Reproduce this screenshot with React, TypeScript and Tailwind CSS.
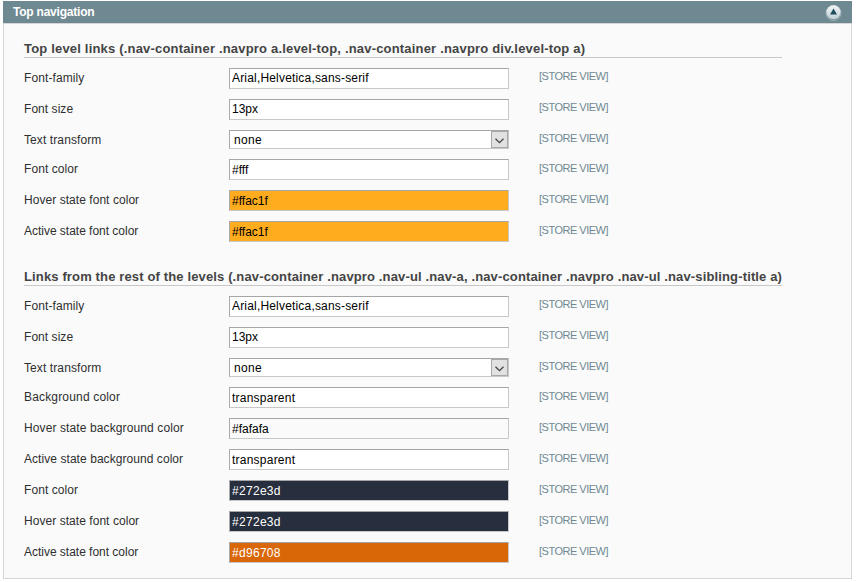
type Field = {
  label: string;
  value: string;
  look?: string;
  select?: boolean;
  labelTracking?: string;
  valueTracking?: string;
  color?: boolean;
};

const topLevel: Field[] = [
  { label: "Font-family", value: "Arial,Helvetica,sans-serif", labelTracking: "tracking-[0.1px]", valueTracking: "tracking-[0.18px]" },
  { label: "Font size", value: "13px", labelTracking: "tracking-[0.05px]" },
  { label: "Text transform", value: "none", select: true, labelTracking: "tracking-[0.1px]", valueTracking: "tracking-[0.3px]" },
  { label: "Font color", value: "#fff", color: true, labelTracking: "tracking-[0.08px]" },
  { label: "Hover state font color", value: "#ffac1f", look: "bg-[#ffac1f] text-black", color: true, labelTracking: "tracking-[0.05px]" },
  { label: "Active state font color", value: "#ffac1f", look: "bg-[#ffac1f] text-black", color: true, labelTracking: "tracking-[-0.02px]" },
];

const otherLevels: Field[] = [
  { label: "Font-family", value: "Arial,Helvetica,sans-serif", labelTracking: "tracking-[0.1px]", valueTracking: "tracking-[0.18px]" },
  { label: "Font size", value: "13px", labelTracking: "tracking-[0.05px]" },
  { label: "Text transform", value: "none", select: true, labelTracking: "tracking-[0.1px]", valueTracking: "tracking-[0.3px]" },
  { label: "Background color", value: "transparent", color: true, labelTracking: "tracking-[0.17px]", valueTracking: "tracking-[0.23px]" },
  { label: "Hover state background color", value: "#fafafa", look: "bg-[#fafafa] text-black", color: true, labelTracking: "tracking-[0.11px]" },
  { label: "Active state background color", value: "transparent", color: true, labelTracking: "tracking-[0.06px]", valueTracking: "tracking-[0.23px]" },
  { label: "Font color", value: "#272e3d", look: "bg-[#272e3d] text-white", color: true, labelTracking: "tracking-[0.08px]", valueTracking: "tracking-[0.3px]" },
  { label: "Hover state font color", value: "#272e3d", look: "bg-[#272e3d] text-white", color: true, labelTracking: "tracking-[0.05px]", valueTracking: "tracking-[0.3px]" },
  { label: "Active state font color", value: "#d96708", look: "bg-[#d96708] text-white", color: true, labelTracking: "tracking-[-0.02px]", valueTracking: "tracking-[0.3px]" },
];

function Row({ field }: { field: Field }) {
  const { label, value, look = "bg-white text-black", select, labelTracking = "", valueTracking = "", color } = field;
  const box = select ? "h-[19px] pl-[4px]" : color ? "h-[21px] pt-px pl-[2px]" : "h-[21px] pb-px pl-[2px]";
  return (
    <div className={`flex items-start ${select ? "h-[29px]" : "h-[31px]"}`}>
      <div className={`w-[205px] shrink-0 pt-[2px] leading-4 text-[#2f2f2f] ${labelTracking}`}>{label}</div>
      <div
        className={`flex w-[280px] shrink-0 items-center border border-t-[#a6a6a6] border-l-[#aaa] border-r-[#c8c8c8] border-b-[#c8c8c8] ${box} ${look} ${valueTracking}`}
      >
        <span className="grow leading-4">{value}</span>
        {select && (
          <span className="flex h-[17px] w-[17px] items-center justify-center border border-[#a8a8a8] bg-[#e1e1e1]">
            <svg className="mt-[2px]" width="9" height="6" viewBox="0 0 9 6" fill="none">
              <path d="M0.5 0.7 4.5 4.7 8.5 0.7" stroke="#444" strokeWidth="1.3" />
            </svg>
          </span>
        )}
      </div>
      <div className={`pl-[30px] text-[11px] leading-4 tracking-[-0.5px] text-[#6f8992] ${color ? "pt-px" : ""}`}>[STORE VIEW]</div>
    </div>
  );
}

function Group({ title, fields, tracking }: { title: string; fields: Field[]; tracking: string }) {
  return (
    <section>
      <h4 className={`mb-[10px] h-[18px] w-[758px] border-b border-[#c8c8c8] text-[13px] leading-[17px] font-bold whitespace-nowrap text-[#444] ${tracking}`}>
        {title}
      </h4>
      {fields.map((field, i) => (
        <Row key={i} field={field} />
      ))}
    </section>
  );
}

export default function App() {
  return (
    <div className="h-[582px] w-[856px] bg-white pt-px pl-[3px] font-['Liberation_Sans',Arial,sans-serif] text-[12px]">
      <header className="flex h-[22px] w-[849px] items-center justify-between bg-[#6f8992] pr-[9px] pl-[10px] font-bold text-white">
        <span className="leading-4 tracking-[-0.22px]">Top navigation</span>
        <svg width="18" height="18" viewBox="0 0 18 18">
          <defs>
            <linearGradient id="knob" x1="0" y1="0" x2="0" y2="1">
              <stop offset="0" stopColor="#f1f5f6" />
              <stop offset="1" stopColor="#c3d1d5" />
            </linearGradient>
          </defs>
          <circle cx="8.5" cy="10" r="7.5" fill="none" stroke="#a9bbc1" strokeWidth="0.8" />
          <circle cx="8.5" cy="9.2" r="7" fill="url(#knob)" />
          <path d="M8.5 5.6 12 11.5H5Z" fill="#1d4e5b" />
        </svg>
      </header>
      <main className="flex h-[556px] w-[849px] flex-col gap-[16px] border border-[#d6d6d6] bg-[#fafafa] pt-[16px] pl-[20px]">
        <Group title="Top level links (.nav-container .navpro a.level-top, .nav-container .navpro div.level-top a)" fields={topLevel} tracking="tracking-[0.185px]" />
        <Group title="Links from the rest of the levels (.nav-container .navpro .nav-ul .nav-a, .nav-container .navpro .nav-ul .nav-sibling-title a)" fields={otherLevels} tracking="tracking-[0.14px]" />
      </main>
    </div>
  );
}
